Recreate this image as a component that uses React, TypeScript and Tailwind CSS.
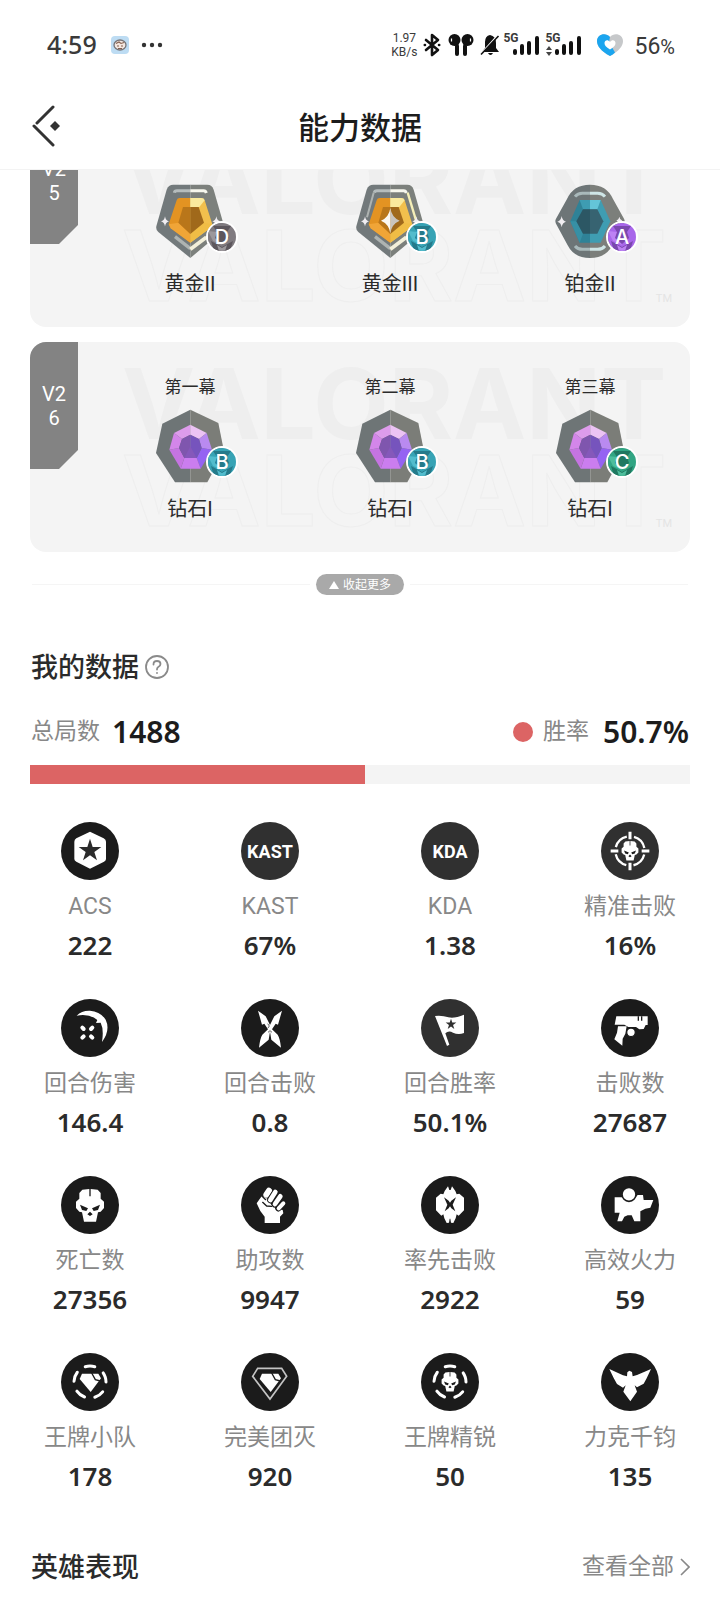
import React from 'react';

type Tier = 'gold2' | 'gold3' | 'platinum' | 'diamond';
type Grade = 'A' | 'B' | 'C' | 'D';

interface Act {
  act?: string;
  tier: Tier;
  grade: Grade;
  name: string;
}

interface Stat {
  label: string;
  value: string;
  icon: React.ReactNode;
}

const GRADES: Record<Grade, { base: string; dark: string; light: string }> = {
  A: { base: '#a866ea', dark: '#7a48ae', light: '#bd82f4' },
  B: { base: '#37a3b5', dark: '#257a8a', light: '#52bccd' },
  C: { base: '#31a583', dark: '#207860', light: '#4dbd9b' },
  D: { base: '#807b80', dark: '#5d575d', light: '#9c989c' },
};

const SEASONS: { id: string; acts: Act[] }[] = [
  {
    id: 'V25',
    acts: [
      { tier: 'gold2', grade: 'D', name: '黄金II' },
      { tier: 'gold3', grade: 'B', name: '黄金III' },
      { tier: 'platinum', grade: 'A', name: '铂金II' },
    ],
  },
  {
    id: 'V26',
    acts: [
      { act: '第一幕', tier: 'diamond', grade: 'B', name: '钻石I' },
      { act: '第二幕', tier: 'diamond', grade: 'B', name: '钻石I' },
      { act: '第三幕', tier: 'diamond', grade: 'C', name: '钻石I' },
    ],
  },
];

const Sparkle = ({ x, y, r }: { x: number; y: number; r: number }) => (
  <path
    transform={`translate(${x} ${y}) scale(${r})`}
    d="M0-1.3Q.16-.2 1 0Q.16.2 0 1.3Q-.16.2-1 0Q-.16-.2 0-1.3Z"
    fill="#f1eef2"
  />
);

const GoldBadge = ({ level }: { level: 2 | 3 }) => (
  <g>
    <path d="M106 2H55Q40 2 35 17L4 127Q2 137 10 144L106 222Z" fill="#72797b" />
    <path d="M106 2H157Q171 2 176 17L207 125Q209 135 202 142L106 222Z" fill="#7c807c" />
    <path d="M58 26Q59 20 66 20H106" fill="none" stroke="#b5bcbd" strokeWidth="9" />
    <path d="M106 20H146Q152 20 154 27" fill="none" stroke="#f7f7ee" strokeWidth="9" />
    <path d="M60 158L106 194" stroke="#aeb3b1" strokeWidth="10" />
    <path d="M106 196L154 160" stroke="#f3f0da" strokeWidth="11" />
    {level === 3 && (
      <>
        <path d="M56 26L36 100" stroke="#aeb3b1" strokeWidth="6" />
        <path d="M158 26L184 112" stroke="#f5efb8" strokeWidth="7" />
      </>
    )}
    <path d="M106 42H74Q67 42 65 49L41 121L47 133L106 176Z" fill="#e39322" />
    <path d="M106 42H138Q147 42 149 49L172 121L165 133L106 176Z" fill="#f2c04d" />
    <path d="M106 42H138Q147 42 149 49L133 69H106Z" fill="#faea9d" />
    <path d="M106 150V176L165 133L172 121L147 116Z" fill="#f0bd45" />
    <path d="M41 121L70 116L106 150V176L47 133Z" fill="#f0a537" />
    <path d="M106 69H84L70 116L106 150Z" fill="#b9761a" />
    <path d="M106 69H131L147 116L106 150Z" fill="#a0691b" />
    {level === 3 && (
      <>
        <path d="M106 72Q110 100 134 110Q110 120 106 148Z" fill="#c9c4bd" />
        <path d="M106 72Q102 100 78 110Q102 120 106 148Z" fill="#fbf8f2" />
      </>
    )}
    <Sparkle x={30} y={112} r={12} />
    <Sparkle x={184} y={112} r={12} />
  </g>
);

const PlatinumBadge = () => (
  <g>
    <path d="M105 2Q55 2 36 45L3 104Q-1 111 3 119L38 184Q57 222 105 222Z" fill="#6d7577" />
    <path d="M105 2Q155 2 174 45L207 104Q211 111 207 119L172 184Q153 222 105 222Z" fill="#7c7f7b" />
    <path d="M60 38Q68 28 82 28H105" fill="none" stroke="#a9b9bb" strokeWidth="9" />
    <path d="M105 28H128Q142 28 150 38" fill="none" stroke="#cfe6e6" strokeWidth="9" />
    <path d="M60 186Q68 196 82 196H105" fill="none" stroke="#a9b9bb" strokeWidth="9" />
    <path d="M105 196H128Q142 196 150 186" fill="none" stroke="#cfe6e6" strokeWidth="9" />
    <path d="M105 48H74L46 112L74 176H105Z" fill="#2f8297" />
    <path d="M105 48H137L166 112L137 176H105Z" fill="#3f9db2" />
    <path d="M74 48H105V76H84Z" fill="#3e9cb2" />
    <path d="M105 48H137L127 76H105Z" fill="#64c5d8" />
    <path d="M46 112H64L84 149L74 176Z" fill="#3790a5" />
    <path d="M105 76H84L64 112L84 149H105Z" fill="#2c5764" />
    <path d="M105 76H127L145 112L127 149H105Z" fill="#376371" />
    <Sparkle x={20} y={113} r={13} />
    <Sparkle x={193} y={110} r={9} />
  </g>
);

const DiamondBadge = () => (
  <g>
    <path d="M106 2L22 44L3 132L60 220H106Z" fill="#6e7576" />
    <path d="M106 2L190 42L207 127L157 220H106Z" fill="#7b7d78" />
    <path d="M106 47L57 72L81 90L106 77Z" fill="#dd9cec" />
    <path d="M106 47L155 72L132 90L106 77Z" fill="#ecc3f4" />
    <path d="M155 72L171 122L140 117L132 90Z" fill="#b98af0" />
    <path d="M171 122L137 179L125 147L140 117Z" fill="#9563f2" />
    <path d="M137 179H77L88 147H125Z" fill="#cb7def" />
    <path d="M77 179L43 122L72 117L88 147Z" fill="#c574e2" />
    <path d="M43 122L57 72L81 90L72 117Z" fill="#d386e9" />
    <path d="M106 77L81 90L72 117L88 147H106Z" fill="#7f56ae" />
    <path d="M106 77L132 90L140 117L125 147H106Z" fill="#7654bd" />
    <path d="M106 112L88 147H125Z" fill="#8558ba" />
  </g>
);

const RankBadge = ({ tier, grade }: { tier: Tier; grade: Grade }) => {
  const colors = GRADES[grade];
  return (
    <div className="relative mt-[10px] h-[74px] w-[70px]">
      <svg viewBox="0 0 210 222" className="h-full w-full">
        {tier === 'gold2' && <GoldBadge level={2} />}
        {tier === 'gold3' && <GoldBadge level={3} />}
        {tier === 'platinum' && <PlatinumBadge />}
        {tier === 'diamond' && <DiamondBadge />}
      </svg>
      <div className="absolute top-[37px] left-[51px] grid h-8 w-8 place-items-center overflow-hidden rounded-full border-2 border-white">
        <svg viewBox="0 0 28 28" className="col-start-1 row-start-1 h-7 w-7">
          <rect width="28" height="28" fill={colors.base} />
          <path d="M5 3H23L19 9H9Z" fill={colors.dark} />
          <path d="M0 8L9 9L14 22L5 18Z" fill={colors.light} />
          <path d="M9 9H19L21 15L14 21L7 15Z" fill={colors.dark} />
          <path d="M3 18L14 24L25 18L22 28H6Z" fill={colors.dark} />
          <path d="M9 22L14 25L19 22L17 28H11Z" fill={colors.light} />
        </svg>
        <span className="col-start-1 row-start-1 font-[Inter,sans-serif] text-[20px] leading-none font-medium text-white">
          {grade}
        </span>
      </div>
    </div>
  );
};

const SeasonCard = ({ id, acts }: { id: string; acts: Act[] }) => (
  <section className="relative flex overflow-hidden rounded-[16px] bg-[#f4f4f4]">
    <div
      aria-hidden="true"
      className="absolute top-[18px] left-[92px] font-[Inter,sans-serif] text-[98px] leading-[87px] font-bold whitespace-nowrap text-[#eeeeee] select-none"
    >
      <div>VALORANT</div>
      <div className="text-[#f4f4f4] [-webkit-text-stroke:1px_#eeeeee]">VALORANT</div>
    </div>
    <div aria-hidden="true" className="absolute right-[18px] bottom-[20px] text-[11px] leading-4 text-[#e4e4e4]">TM</div>

    <div className="relative flex h-[127px] w-12 shrink-0 items-center bg-[#838383] px-3 text-center text-[20px] leading-6 break-all text-white [clip-path:polygon(0_0,100%_0,100%_108px,29px_100%,0_100%)]">
      {id}
    </div>
    <div className="relative ml-3 grid flex-1 grid-cols-3 pt-[33px] pb-[29px]">
      {acts.map((a, i) => (
        <div key={i} className="flex flex-col items-center text-[#2b2b2b]">
          <span className="h-6 text-[17px] leading-6">{a.act}</span>
          <RankBadge tier={a.tier} grade={a.grade} />
          <span className="mt-3 text-[20px] leading-7">{a.name}</span>
        </div>
      ))}
    </div>
  </section>
);

const Disc = ({ soft = false, children }: { soft?: boolean; children: React.ReactNode }) => (
  <svg viewBox="0 0 174 174" className="h-[58px] w-[58px]" fill="#fff">
    <circle cx="87" cy="87" r="87" fill={soft ? '#303030' : '#1b1b1b'} />
    {children}
  </svg>
);

const TextDisc = ({ text }: { text: string }) => (
  <div className="flex h-[58px] w-[58px] items-center justify-center rounded-full bg-[#303030] text-[18px] font-bold text-white">
    {text}
  </div>
);

const STAR = 'M0-36L8-11H34L13 4L21 29L0 14L-21 29L-13 4L-34-11H-8Z';

const Skull = () => (
  <g>
    <path d="M64 41L85 39V61H89V39L110 41L119 51V68L129 77V96L119 107L111 109L105 137H69L63 109L55 107L45 96V77L55 68V51Z" fill="#fff" />
    <path d="M57 86L81 97L76 105L63 102ZM117 86L93 97L98 105L111 102ZM87 107L79 115L87 120L95 115Z" fill="#1b1b1b" />
  </g>
);

const SmallSkull = () => (
  <g transform="translate(87 87) scale(.6) translate(-87 -89)">
    <Skull />
  </g>
);

const BrokenRing = () => (
  <circle
    cx="87"
    cy="87"
    r="48"
    fill="none"
    stroke="#fff"
    strokeWidth="9"
    strokeLinecap="round"
    strokeDasharray="29 31.32"
    transform="rotate(-107.3 87 87)"
  />
);

const Gem = () => (
  <g>
    <path d="M63 62H112L120 76L89 117L56 78Z" />
    <path d="M92 60L103 80L118 84" fill="none" stroke="#1b1b1b" strokeWidth="4" />
  </g>
);

const BladeHalf = () => (
  <path d="M51 35L74 52L83 70L87 78V98L83 122L54 146Q57 118 64 107L81 91L70 74L63 77Z" />
);

const STATS: Stat[] = [
  {
    label: 'ACS',
    value: '222',
    icon: (
      <Disc>
        <path d="M87 29L128 49Q135 53 135 59V111Q135 116 129 119L87 140L46 119Q40 116 40 111V59Q40 53 46 49Z" />
        <path d={STAR} transform="translate(87 86)" fill="#2b2b2b" />
      </Disc>
    ),
  },
  { label: 'KAST', value: '67%', icon: <TextDisc text="KAST" /> },
  { label: 'KDA', value: '1.38', icon: <TextDisc text="KDA" /> },
  {
    label: '精准击败',
    value: '16%',
    icon: (
      <Disc soft>
        <circle cx="87" cy="87" r="44" fill="none" stroke="#fff" strokeWidth="7" strokeDasharray="47 22.1" strokeDashoffset="-11" />
        <path d="M87 29V52M87 122V145M29 87H52M122 87H145" stroke="#fff" strokeWidth="9" />
        <SmallSkull />
      </Disc>
    ),
  },
  {
    label: '回合伤害',
    value: '146.4',
    icon: (
      <Disc>
        <path d="M47 50Q62 34 87 35Q118 37 134 62Q149 93 123 129Q129 91 119 71L105 72L109 63Q85 43 47 50Z" />
        <path d="M64 86L68 90M94 86L90 90M64 116L68 112M94 116L90 112" stroke="#fff" strokeWidth="12" strokeLinecap="round" />
      </Disc>
    ),
  },
  {
    label: '回合击败',
    value: '0.8',
    icon: (
      <Disc>
        <BladeHalf />
        <g transform="matrix(-1 0 0 1 174 0)">
          <BladeHalf />
        </g>
        <path d="M80 74L85 81L81 87M93 100L87 95L81 100" fill="none" stroke="#1b1b1b" strokeWidth="2" />
      </Disc>
    ),
  },
  {
    label: '回合胜率',
    value: '50.1%',
    icon: (
      <Disc soft>
        <path d="M42 51Q65 49 82 55Q100 60 129 47V102Q112 108 96 101Q83 93 73 103L85 137L78 141Z" />
        <path d={STAR} transform="translate(90 76) scale(.47)" fill="#303030" />
      </Disc>
    ),
  },
  {
    label: '击败数',
    value: '27687',
    icon: (
      <Disc>
        <path d="M46 52H140V78H134L128 90L115 91L105 84H82L70 77H41Z" />
        <path d="M112 52V65M122 52V65" stroke="#1b1b1b" strokeWidth="4" />
        <path d="M51 82H77L73 104L65 119L64 140L40 121L48 101Z" />
        <circle cx="90" cy="100" r="13" stroke="#1b1b1b" strokeWidth="4" />
      </Disc>
    ),
  },
  { label: '死亡数', value: '27356', icon: <Disc><Skull /></Disc> },
  {
    label: '助攻数',
    value: '9947',
    icon: (
      <Disc>
        <path d="M47 82L63 59L79 68L96 94L125 102L127 112L117 122V141H71V122L58 105Z" />
        <path d="M84 44L76 56" stroke="#fff" strokeWidth="18" strokeLinecap="round" />
        <g fill="none" strokeLinecap="round">
          <path d="M103 48L88 72M118 61L102 84M128 81L112 97" stroke="#1b1b1b" strokeWidth="19" />
          <path d="M103 48L88 72M118 61L102 84" stroke="#fff" strokeWidth="14" />
          <path d="M127 82L113 97" stroke="#fff" strokeWidth="12" />
          <path d="M65 79L77 90L92 91M62 59L74 71" stroke="#1b1b1b" strokeWidth="4" />
        </g>
      </Disc>
    ),
  },
  {
    label: '率先击败',
    value: '2922',
    icon: (
      <Disc>
        <path d="M81 31L85 42H89L93 31L103 45L107 55L115 53L129 65V103L113 119L107 115L104 127L97 141L90 140L88 128H86L84 140L77 141L70 127L67 115L61 119L45 103V65L59 53L67 55L71 45Z" />
        <path d="M69 64L83 74L87 80L91 74L105 64L95 86L103 106L91 97L87 91L83 97L71 106L79 86Z" fill="#1b1b1b" />
      </Disc>
    ),
  },
  {
    label: '高效火力',
    value: '59',
    icon: (
      <Disc>
        <path d="M41 64H104L110 57H126L128 72H157L148 95L133 98L118 106V136H100L92 118H80L70 122L63 136H49L56 110H41Z" />
        <circle cx="84" cy="55" r="21" stroke="#1b1b1b" strokeWidth="5" />
      </Disc>
    ),
  },
  { label: '王牌小队', value: '178', icon: <Disc><BrokenRing /><Gem /></Disc> },
  {
    label: '完美团灭',
    value: '920',
    icon: (
      <Disc>
        <path d="M50 46H122L137 70L87 138L35 70Z" fill="none" stroke="#c4c4c4" strokeWidth="5" />
        <Gem />
      </Disc>
    ),
  },
  { label: '王牌精锐', value: '50', icon: <Disc><BrokenRing /><SmallSkull /></Disc> },
  {
    label: '力克千钧',
    value: '135',
    icon: (
      <Disc>
        <path d="M25 48L66 67L78 70L79 58L85 53L93 57L95 70L108 66L150 48L137 76L128 92L108 103L101 97L108 116L88 145L67 116L74 97L66 104L48 93L38 75Z" />
      </Disc>
    ),
  },
];

const SignalBars = () => (
  <svg viewBox="0 0 28 20" className="h-5 w-7" stroke="#111" strokeWidth="4" strokeLinecap="round">
    <path d="M3 15V17M10 10V17M17 7V17M25 2V17" />
  </svg>
);

const StatusBar = () => (
  <div className="flex h-[85px] items-center justify-between pt-1 pr-[45px] pl-[47px] text-[#3a3a3a]">
    <div className="flex items-center">
      <span className="font-['Noto_Sans',sans-serif] text-[25px] font-medium">4:59</span>
      <svg viewBox="0 0 18 18" className="ml-[14px] h-[18px] w-[18px]">
        <rect width="18" height="18" rx="4" fill="#bddcf3" />
        <ellipse cx="9" cy="9" rx="6" ry="5" fill="#f3e7e0" stroke="#767477" strokeWidth="1.3" />
        <path d="M5 7.500L8 6L10 7.500L13 6.500M6 10H8M10 10H12M7 12.500H11" stroke="#85604f" strokeWidth="1.100" fill="none" />
      </svg>
      <svg viewBox="0 0 22 6" className="ml-3 h-[6px] w-[22px]" fill="#333">
        <circle cx="3" cy="3" r="2.200" />
        <circle cx="11" cy="3" r="2.200" />
        <circle cx="19" cy="3" r="2.200" />
      </svg>
    </div>

    <div className="flex items-center">
      <div className="text-center text-[12px] leading-[14px]">
        <div>1.97</div>
        <div>KB/s</div>
      </div>
      <svg viewBox="0 0 18 24" className="ml-[6px] h-6 w-[18px]" fill="none" stroke="#111" strokeWidth="2.600" strokeLinejoin="round" strokeLinecap="round">
        <path d="M3 7L15 17L9 22V2L15 7L3 17" />
        <path d="M1.800 12H2M16 12H16.200" />
      </svg>
      <svg viewBox="0 0 26 24" className="ml-[7px] h-6 w-[26px]" fill="#111">
        <circle cx="6.500" cy="7" r="6" />
        <circle cx="19.500" cy="7" r="6" />
        <rect x="7" y="11" width="4" height="12" rx="2" />
        <rect x="15" y="11" width="4" height="12" rx="2" />
        <path d="M3.500 5.500V8.500M22.500 5.500V8.500" stroke="#fff" strokeWidth="1.200" />
      </svg>
      <svg viewBox="0 0 20 22" className="ml-[6px] h-[22px] w-5">
        <path d="M10 1Q16 2 16 9V14L19 18H2L5 14V8Q5 2 10 1ZM8 19H13Q12 21 10.500 21Q9 21 8 19Z" fill="#111" />
        <path d="M17 2L2 18.500" stroke="#fff" strokeWidth="1.500" />
        <path d="M18.500 2L1 20.500" stroke="#111" strokeWidth="1.600" />
      </svg>
      <div className="relative ml-[12px] h-6">
        <span className="absolute -top-px -left-[9px] text-[12px] leading-3 font-bold">5G</span>
        <div className="pt-[3px]"><SignalBars /></div>
      </div>
      <div className="relative ml-[14px] h-6">
        <span className="absolute -top-px -left-[9px] text-[12px] leading-3 font-bold">5G</span>
        <svg viewBox="0 0 8 10" className="absolute top-[13px] -left-[9px] h-[10px] w-2" fill="#444">
          <path d="M4 0L7 4H1ZM4 10L7 6H1Z" />
        </svg>
        <div className="pt-[3px]"><SignalBars /></div>
      </div>
      <svg viewBox="0 0 28 24" className="ml-[14px] h-6 w-7">
        <path d="M14 23C5 18 1 13 1 8C1 1 10-1 14 4C18-1 27 1 27 8C27 13 23 18 14 23Z" fill="#c6c8ca" />
        <path d="M14 23C5 18 1 13 1 8C1 1 10-1 14 4L13 9L19 19.500Q17 21.500 14 23Z" fill="#1ba5ef" />
        <path d="M14 16.500C10 14 8.500 12.500 8.500 10C8.500 7 12 6 14 9C16 6 19.500 7 19.500 10C19.500 12.500 18 14 14 16.500Z" fill="#fff" />
      </svg>
      <span className="ml-[10px] pt-1 text-[23px] leading-7">
        56<span className="text-[20px]">%</span>
      </span>
    </div>
  </div>
);

const SectionTitle = ({ children }: { children: React.ReactNode }) => (
  <h2 className="pt-[3px] text-[27px] leading-9 font-medium text-[#2b2b2b]">{children}</h2>
);

const App: React.FC = () => {
  const winRate = 50.7;

  return (
    <div className="min-h-screen bg-white font-[Roboto,'Noto_Sans_CJK_SC',sans-serif] text-[#222]">
      <StatusBar />

      <header className="grid h-[85px] grid-cols-[1fr_auto_1fr] items-center border-b border-[#f3f3f3] px-[30px]">
        <button type="button" aria-label="返回" className="justify-self-start">
          <svg viewBox="0 0 30 44" className="h-11 w-[30px]" fill="none" stroke="#333" strokeWidth="3" strokeLinecap="round">
            <path d="M23 2L7 18M4 21L23 40" />
            <path d="M25 16L30 21L25 26L20 21Z" fill="#333" stroke="none" />
          </svg>
        </button>
        <h1 className="pt-[3px] text-[31px] leading-10 font-medium text-[#1c1c1c]">能力数据</h1>
      </header>

      <main>
        {/* season history, scrolled partly under the title bar */}
        <div className="overflow-hidden px-[30px]">
          <div className="-mt-[53px] flex flex-col gap-[15px]">
            {SEASONS.map(s => (
              <SeasonCard key={s.id} id={s.id} acts={s.acts} />
            ))}
          </div>
        </div>

        <div className="mt-[22px] flex items-center gap-[6px] px-8">
          <div className="h-px flex-1 bg-[#f5f5f5]" />
          <button type="button" className="flex h-[21px] items-center gap-1 rounded-full bg-[#a9a9a9] px-[13px] text-[12px] leading-4 text-white">
            <svg viewBox="0 0 10 8" className="h-2 w-[10px]" fill="#fff">
              <path d="M5 0L10 8H0Z" />
            </svg>
            收起更多
          </button>
          <div className="h-px flex-1 bg-[#f5f5f5]" />
        </div>

        <section className="mt-[52px]">
          <div className="flex items-center gap-[6px] px-[31px]">
            <SectionTitle>我的数据</SectionTitle>
            <button type="button" aria-label="数据说明">
              <svg viewBox="0 0 24 24" className="h-6 w-6" fill="none" stroke="#8a8a8a" strokeWidth="1.800" strokeLinecap="round">
                <circle cx="12" cy="12" r="11" />
                <path d="M8.500 9.500Q8.500 6 12 6Q15.500 6 15.500 9Q15.500 11 13 12.300Q12 13 12 14.500M12 17.800V18" />
              </svg>
            </button>
          </div>

          <div className="mt-7 flex items-center justify-between px-[31px] text-[23px] leading-9 text-[#888888]">
            <div className="flex items-center gap-3">
              总局数
              <span className="font-['Noto_Sans',sans-serif] text-[30px] font-semibold text-[#1c1c1c]">1488</span>
            </div>
            <div className="flex items-center">
              <span className="h-5 w-5 rounded-full bg-[#dc6464]" />
              <span className="ml-[10px]">胜率</span>
              <span className="ml-[14px] font-['Noto_Sans',sans-serif] text-[30px] font-semibold text-[#1c1c1c]">{winRate}%</span>
            </div>
          </div>

          <div className="mx-[30px] mt-[15px] h-[19px] bg-[#f4f4f4]">
            <div className="h-full bg-[#dc6464]" style={{ width: `${winRate}%` }} />
          </div>

          <div className="mt-[38px] grid grid-cols-4 gap-y-[38px]">
            {STATS.map(s => (
              <div key={s.label} className="flex flex-col items-center">
                {s.icon}
                <span className="mt-[11px] text-[23px] leading-8 text-[#888888]">{s.label}</span>
                <span className="mt-[6px] font-['Noto_Sans',sans-serif] text-[26px] leading-8 font-semibold text-[#2b2b2b]">{s.value}</span>
              </div>
            ))}
          </div>
        </section>

        <section className="mt-[55px] flex items-center justify-between pr-[30px] pb-[14px] pl-[31px]">
          <SectionTitle>英雄表现</SectionTitle>
          <a href="#heroes" className="flex items-center gap-[6px] text-[23px] leading-8 text-[#888888]">
            查看全部
            <svg viewBox="0 0 10 18" className="h-[18px] w-[10px]" fill="none" stroke="#888888" strokeWidth="1.600">
              <path d="M1 1L9 9L1 17" />
            </svg>
          </a>
        </section>
      </main>
    </div>
  );
};

export default App;
